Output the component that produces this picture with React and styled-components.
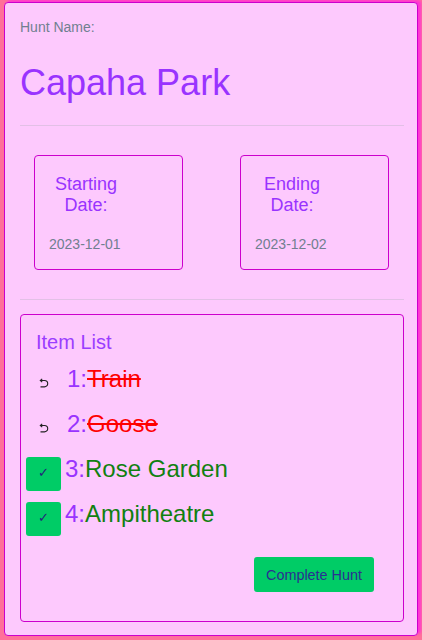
import styled, { createGlobalStyle } from 'styled-components';

const GlobalStyle = createGlobalStyle`
  body {
    margin: 0;
    padding: 2px 4px 6px 4px;
    background: #ff7099;
    font-family: "Liberation Sans", Arial, sans-serif;
  }
`;

const items = [
  { id: 1, name: "Train", found: true },
  { id: 2, name: "Goose", found: true },
  { id: 3, name: "Rose Garden", found: false },
  { id: 4, name: "Ampitheatre", found: false },
];

const UndoIcon = () => (
  <svg width="11" height="10" viewBox="0 0 11 10" style={{ verticalAlign: '-1px' }}>
    <path d="M2.5 2.5 H6.5 A3.2 3.2 0 0 1 6.5 8.9 H2.5" fill="none" stroke="#222" strokeWidth="1.1" />
    <path d="M4.2 0.8 L2.3 2.5 L4.2 4.2" fill="none" stroke="#222" strokeWidth="1.1" />
  </svg>
);

const App = () => {
  return (
    <>
      <GlobalStyle />
      <Card>
        <SmallLabel>Hunt Name:</SmallLabel>
        <HuntName>Capaha Park</HuntName>
        <Divider />
        <DateRow>
          <DateBox>
            <DateLabel>Starting Date:</DateLabel>
            <DateValue>2023-12-01</DateValue>
          </DateBox>
          <DateBox>
            <DateLabel>Ending Date:</DateLabel>
            <DateValue>2023-12-02</DateValue>
          </DateBox>
        </DateRow>
        <Divider $top={29} />
        <ItemBox>
          <ListTitle>Item List</ListTitle>
          {items.map((item) => (
            <ItemRow key={item.id}>
              <CheckButton $found={item.found}>
                {item.found ? <UndoIcon /> : "✓"}
              </CheckButton>
              <ItemNumber>{item.id}:</ItemNumber>
              <ItemName $found={item.found}>{item.name}</ItemName>
            </ItemRow>
          ))}
          <Footer>
            <CompleteButton>Complete Hunt</CompleteButton>
          </Footer>
        </ItemBox>
      </Card>
    </>
  );
};

const Card = styled.div`
  background: #fdc9fd;
  border: 1px solid #cc00cc;
  border-radius: 4px;
  box-shadow: 3px -2px 3px #ff33d6;
  padding: 16px 13px 13px 15px;
  width: 414px;
  box-sizing: border-box;
`;

const SmallLabel = styled.div`
  font-size: 14px;
  line-height: 16px;
  color: #708090;
`;

const HuntName = styled.h1`
  margin: 27px 0 0 0;
  font-size: 36px;
  font-weight: 400;
  line-height: 41px;
  color: #9933ff;
`;

const Divider = styled.div`
  height: 1px;
  background: #e2c0e6;
  margin-top: ${(p) => (p.$top ? p.$top : 22)}px;
`;

const DateRow = styled.div`
  display: flex;
  justify-content: space-between;
  padding: 0 15px 0 14px;
  margin-top: 29px;
`;

const DateBox = styled.div`
  width: 149px;
  height: 115px;
  box-sizing: border-box;
  border: 1px solid #cc00cc;
  border-radius: 4px;
  padding: 18px 14px 0 14px;
`;

const DateLabel = styled.div`
  width: 74px;
  text-align: center;
  font-size: 18px;
  line-height: 20.7px;
  color: #9933ff;
`;

const DateValue = styled.div`
  margin-top: 21px;
  font-size: 14px;
  line-height: 16px;
  color: #708090;
`;

const ItemBox = styled.div`
  margin-top: 14px;
  border: 1px solid #cc00cc;
  border-radius: 4px;
  padding: 16px 15px 29px 5px;
`;

const ListTitle = styled.div`
  padding-left: 10px;
  font-size: 20px;
  line-height: 23px;
  color: #9b3dff;
  margin-bottom: 11px;
`;

const ItemRow = styled.div`
  display: flex;
  align-items: baseline;
  margin-bottom: 9px;
`;

const CheckButton = styled.button`
  width: 35px;
  height: 34px;
  padding: 0 0 2px 0;
  border: none;
  border-radius: 3px;
  background: ${(p) => (p.$found ? 'transparent' : '#00cc66')};
  color: #23237a;
  font-family: "DejaVu Sans", sans-serif;
  font-size: 13px;
  line-height: 32px;
  margin-right: ${(p) => (p.$found ? 6 : 4)}px;
`;

const ItemNumber = styled.span`
  font-size: 24px;
  color: #9933ff;
`;

const ItemName = styled.span`
  font-size: 24px;
  color: ${(p) => (p.$found ? '#ff0000' : '#118011')};
  text-decoration: ${(p) => (p.$found ? 'line-through' : 'none')};
`;

const Footer = styled.div`
  display: flex;
  justify-content: flex-end;
  padding-right: 14px;
  margin-top: 21px;
`;

const CompleteButton = styled.button`
  background: #00cc66;
  color: #2a2f92;
  border: none;
  border-radius: 3px;
  font-family: "Liberation Sans", Arial, sans-serif;
  font-size: 14.4px;
  padding: 9px 12px;
  height: 35px;
`;

export default App;
